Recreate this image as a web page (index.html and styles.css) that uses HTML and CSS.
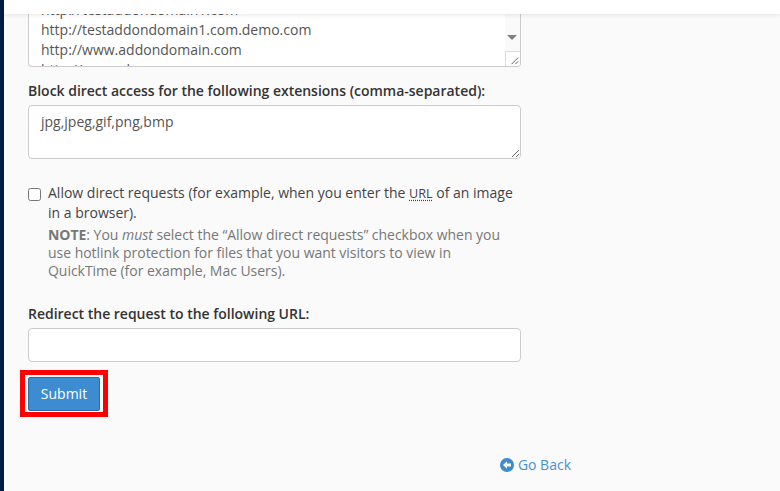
FILE: index.html
```html
<!DOCTYPE html>
<html lang="en">
<head>
<meta charset="utf-8">
<title>Hotlink Protection</title>
<link rel="stylesheet" href="styles.css">
</head>
<body>
<header class="topbar"></header>
<main class="content">
  <div class="listbox">
    <div class="listbox-text">
      <div>http://testaddondomain1.com</div>
      <div>http://testaddondomain1.com.demo.com</div>
      <div>http://www.addondomain.com</div>
      <div>http://example.com</div>
    </div>
    <div class="scroll">
      <span class="scroll-arrow"></span>
    </div>
    <svg class="grip grip-corner" viewBox="0 0 15 15" width="15" height="15"><path d="M6 13 13 6M10 13 13 10" stroke="#555" stroke-width="1" fill="none"/></svg>
  </div>

  <label class="field-label ext-label" for="ext">Block direct access for the following extensions (comma-separated):</label>
  <textarea class="textbox" id="ext" spellcheck="false">jpg,jpeg,gif,png,bmp</textarea>

  <div class="check-row">
    <input type="checkbox" class="check" id="allow">
    <div class="check-body">
      <label for="allow" class="check-label">Allow direct requests (for example, when you enter the <abbr title="Uniform Resource Locator" class="url">URL</abbr> of an image in a browser).</label>
      <p class="note"><strong>NOTE</strong>: You <em>must</em> select the “Allow direct requests” checkbox when you use hotlink protection for files that you want visitors to view in QuickTime (for example, Mac Users).</p>
    </div>
  </div>

  <label class="field-label redirect-label" for="url">Redirect the request to the following URL:</label>
  <input class="url-input" id="url" type="text">

  <div class="highlight"><button class="submit" type="button">Submit</button></div>

  <div class="back-row">
    <a class="back" href="#">
      <svg class="back-icon" viewBox="0 0 14 14" width="14" height="14"><circle cx="7" cy="7" r="7" fill="#3d8bd0"/><path d="M3 7 7 3.2V5.6H11V8.4H7V10.8Z" fill="#fff"/></svg>
      <span>Go Back</span>
    </a>
  </div>
</main>
</body>
</html>
```
FILE: styles.css
```css
* { box-sizing: border-box; }
html, body { margin: 0; height: 491px; overflow: hidden; }
body {
  background: #fafafa;
  border-left: 4px solid #001a42;
  font-family: "Open Sans", "Liberation Sans", sans-serif;
  font-size: 14px;
  line-height: 20px;
  color: #333;
}
.topbar {
  position: absolute;
  top: 0;
  left: 4px;
  right: 0;
  height: 14px;
  background: #fff;
  box-shadow: 0 1px 4px rgba(0, 0, 0, 0.1);
  z-index: 2;
}
.content { padding-left: 24px; width: 493px; box-sizing: content-box; }
.content > * { width: 493px; }

.listbox {
  position: relative;
  height: 67px;
  background: #fff;
  border: 1px solid #ccc;
  border-top: 0;
  border-radius: 0 0 4px 4px;
  overflow: hidden;
  color: #555;
  display: flex;
}
.listbox-text { flex: 1; padding-left: 12px; white-space: nowrap; }
.scroll {
  position: relative;
  width: 15px;
  background: #fafafa;
}
.scroll-arrow {
  position: absolute;
  left: 2px;
  top: 35px;
  border-left: 5px solid transparent;
  border-right: 5px solid transparent;
  border-top: 5px solid #808080;
}
.grip-corner {
  position: absolute;
  right: 0;
  bottom: 0;
  background: #fff;
  border-left: 1px solid #ddd;
  border-top: 1px solid #ddd;
}

.field-label { display: block; font-weight: 600; color: #333; letter-spacing: -0.015px; }
.ext-label { margin-top: 14px; }
.textbox {
  display: block;
  margin-top: 4px;
  height: 54px;
  padding: 6px 12px;
  font: inherit;
  color: #555;
  background: #fff;
  border: 1px solid #ccc;
  border-radius: 4px;
  outline: none;
}

.check-row { display: flex; margin-top: 24px; }
.check {
  flex: none;
  width: 13px;
  height: 13px;
  margin: 5px 7px 0 0;
}
.check-label { display: block; line-height: 19px; color: #444; }
.url { text-decoration: underline dotted; text-underline-offset: 2px; font-size: 12.6px; }
.note { margin: 4px 0 0; line-height: 18px; color: #777; letter-spacing: -0.03px; }

.redirect-label { margin-top: 24px; }
.url-input {
  display: block;
  margin-top: 4px;
  height: 34px;
  background: #fff;
  border: 1px solid #ccc;
  border-radius: 4px;
  outline: none;
}

.highlight {
  width: 88px !important;
  margin: 8px 0 0 -8px;
  padding: 2px 3px 1px;
  border: 5px solid #f00;
  background: #fafafa;
}
.submit {
  display: block;
  width: 72px;
  height: 34px;
  padding: 0;
  font: inherit;
  color: #fff;
  background: #3d8bd0;
  border: 1px solid #2a6ca8;
  border-radius: 2px;
}

.back-row {
  width: 543px !important;
  margin-top: 38px;
  display: flex;
  justify-content: flex-end;
}
.back {
  display: flex;
  align-items: center;
  gap: 4px;
  color: #4a8fcf;
  text-decoration: none;
}
.back-icon { flex: none; }
```
